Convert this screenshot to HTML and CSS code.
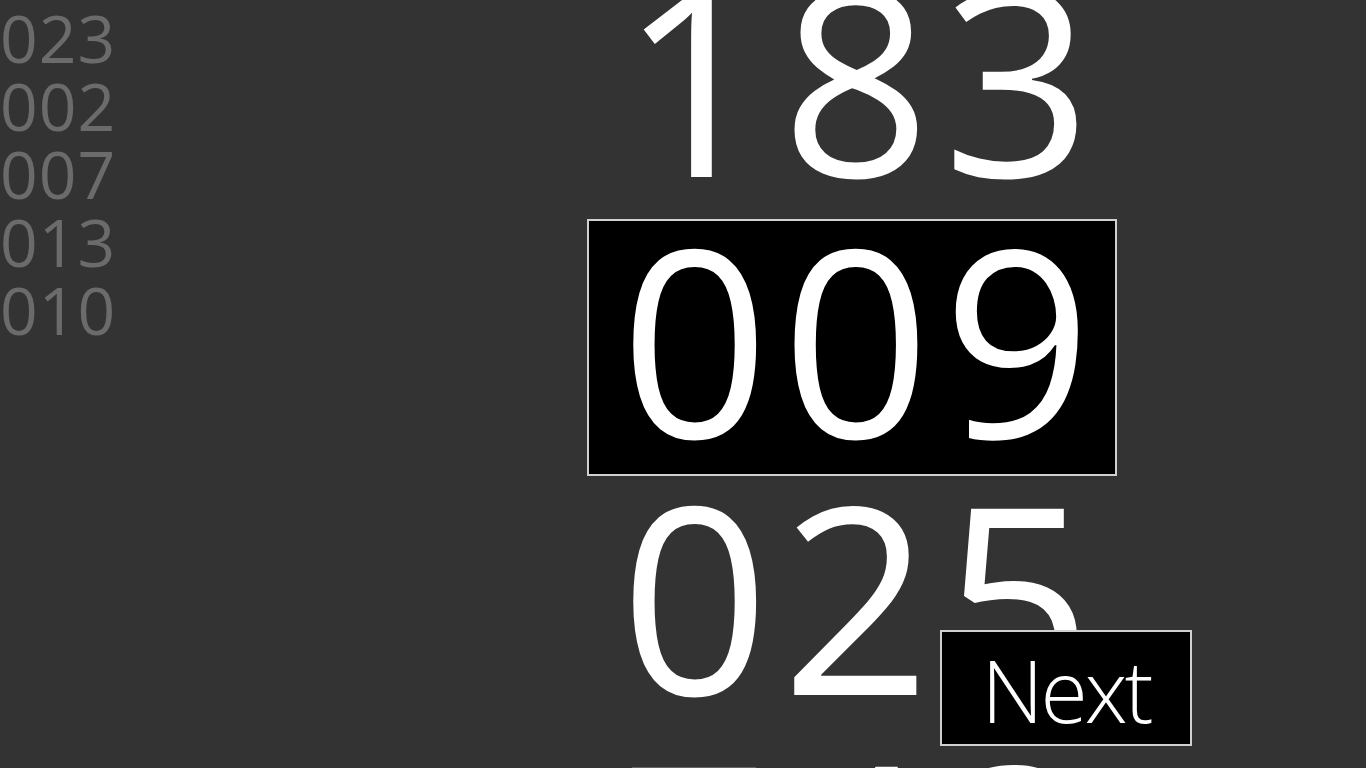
FILE: index.html
```html
<!DOCTYPE html>
<html lang="en">
<head>
<meta charset="utf-8">
<title>Numbers</title>
<link rel="stylesheet" href="styles.css">
</head>
<body>
<div class="app">
  <ul class="history">
    <li>023</li>
    <li>002</li>
    <li>007</li>
    <li>013</li>
    <li>010</li>
  </ul>
  <div class="reel">
    <div class="row">183</div>
    <div class="row current">009</div>
    <div class="row">025</div>
    <div class="row">743</div>
  </div>
</div>
<button class="next" type="button">Next</button>
</body>
</html>
```
FILE: styles.css
```css
html, body {
  margin: 0;
  padding: 0;
  height: 768px;
  overflow: hidden;
  background: #333333;
  font-family: "Open Sans", "Noto Sans", "DejaVu Sans", sans-serif;
}

.app {
  display: grid;
  grid-template-columns: 587px 530px;
  align-items: start;
}

.history {
  list-style: none;
  margin: 0;
  padding: 3px 0 0 0;
  color: #6b6b6b;
  font-size: 66px;
  line-height: 68px;
  letter-spacing: 1px;
}

.history li {
  margin: 0;
  padding: 0;
}

.reel {
  margin-top: -41px;
  color: #ffffff;
  font-size: 261px;
  letter-spacing: 12px;
  text-align: center;
}

.row {
  height: 259px;
  line-height: 233px;
  padding-left: 20px;
  white-space: nowrap;
}

.row.current {
  box-sizing: border-box;
  height: 257px;
  margin: 1px 0;
  line-height: 231px;
  background: #000000;
  border: 2px solid #d0d0d0;
}

.next {
  position: absolute;
  left: 940px;
  top: 630px;
  box-sizing: border-box;
  width: 252px;
  height: 116px;
  margin: 0;
  padding: 4px 0 0 0;
  background: #000000;
  color: #ffffff;
  border: 2px solid #d0d0d0;
  border-radius: 0;
  font-family: "Open Sans", "Noto Sans", "DejaVu Sans", sans-serif;
  font-size: 86px;
  font-weight: 350;
  line-height: 108px;
  letter-spacing: -3px;
  text-align: center;
  vertical-align: top;
}
```
